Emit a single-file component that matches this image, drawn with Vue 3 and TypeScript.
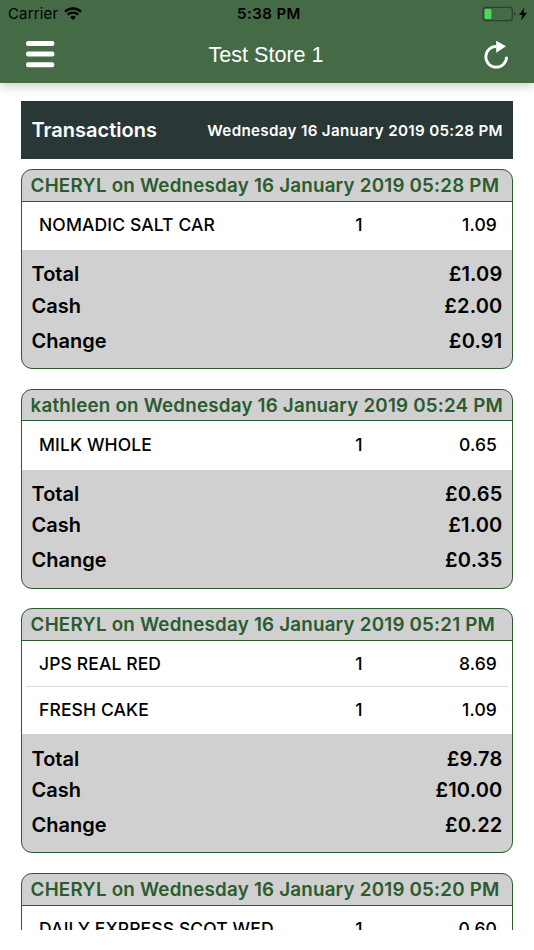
<script setup lang="ts">
interface Item {
  name: string
  qty: number
  price: string
}

interface Transaction {
  user: string
  time: string
  items: Item[]
  total: string
  cash: string
  change: string
}

const day = 'Wednesday 16 January 2019'

const transactions: Transaction[] = [
  {
    user: 'CHERYL', time: '05:28 PM',
    items: [{ name: 'NOMADIC SALT CAR', qty: 1, price: '1.09' }],
    total: '£1.09', cash: '£2.00', change: '£0.91',
  },
  {
    user: 'kathleen', time: '05:24 PM',
    items: [{ name: 'MILK WHOLE', qty: 1, price: '0.65' }],
    total: '£0.65', cash: '£1.00', change: '£0.35',
  },
  {
    user: 'CHERYL', time: '05:21 PM',
    items: [
      { name: 'JPS REAL RED', qty: 1, price: '8.69' },
      { name: 'FRESH CAKE', qty: 1, price: '1.09' },
    ],
    total: '£9.78', cash: '£10.00', change: '£0.22',
  },
  {
    user: 'CHERYL', time: '05:20 PM',
    items: [{ name: 'DAILY EXPRESS SCOT WED', qty: 1, price: '0.60' }],
    total: '', cash: '', change: '',
  },
]
</script>

<template>
  <div class="screen">
    <header class="top">
      <div class="status">
        <div class="carrier">
          <span>Carrier</span>
          <svg class="wifi" viewBox="0 0 18 13" width="18" height="13">
            <path d="M1 4.6 A11.6 11.6 0 0 1 17 4.6" fill="none" stroke="#000" stroke-width="2.5" />
            <path d="M3.7 7.7 A7.7 7.7 0 0 1 14.3 7.7" fill="none" stroke="#000" stroke-width="2.4" />
            <path d="M9 13 L6.1 10.3 A4.1 4.1 0 0 1 11.9 10.3 Z" fill="#000" />
          </svg>
        </div>
        <div class="clock">5:38 PM</div>
        <svg class="battery" viewBox="0 0 46 16" width="46" height="16">
          <rect x="0.9" y="1.3" width="29.4" height="13.4" rx="3" fill="none" stroke="#2b432d" stroke-width="1.3" />
          <rect x="2.6" y="3" width="6.8" height="10" rx="1" fill="#4cd953" />
          <path d="M32.2 5.8 Q33.6 6.5 33.6 8 Q33.6 9.5 32.2 10.2 Z" fill="#2b432d" />
          <path d="M42.4 1.4 L37 9 H40.3 L39 14.6 L45.2 6.7 H41.5 Z" fill="#000" />
        </svg>
      </div>
      <nav class="bar">
        <svg class="menu" viewBox="0 0 30 28" width="30" height="28">
          <rect x="1" y="1" width="28.4" height="5" rx="2.2" fill="#fff" />
          <rect x="1" y="11.5" width="28.4" height="5" rx="2.2" fill="#fff" />
          <rect x="1" y="22.2" width="28.4" height="5" rx="2.2" fill="#fff" />
        </svg>
        <h1 class="title">Test Store 1</h1>
        <svg class="reload" viewBox="0 0 26 30" width="26" height="30">
          <path d="M13.2 7.4 A10.4 10.4 0 1 0 23.6 17.8" fill="none" stroke="#fff" stroke-width="2.8" />
          <path d="M13.2 1.8 L23 7.2 L13.2 13.8 Z" fill="#fff" />
        </svg>
      </nav>
    </header>

    <main class="content">
      <div class="heading">
        <h2 class="heading-title">Transactions</h2>
        <span class="heading-date">{{ day }} 05:28 PM</span>
      </div>

      <section v-for="t in transactions" :key="t.time" class="card">
        <h3 class="card-head">{{ t.user }} on {{ day }} {{ t.time }}</h3>
        <ul class="items">
          <li v-for="item in t.items" :key="item.name" class="item">
            <span>{{ item.name }}</span>
            <span class="qty">{{ item.qty }}</span>
            <span class="price">{{ item.price }}</span>
          </li>
        </ul>
        <div v-if="t.total" class="summary">
          <div class="line"><span>Total</span><span class="amount">{{ t.total }}</span></div>
          <div class="line"><span>Cash</span><span class="amount">{{ t.cash }}</span></div>
          <div class="line change"><span>Change</span><span class="amount">{{ t.change }}</span></div>
        </div>
      </section>
    </main>
  </div>
</template>

<style>
body {
  margin: 0;
  background: #fff;
}
</style>

<style scoped>
.screen {
  display: flex;
  flex-direction: column;
  box-sizing: border-box;
  width: 534px;
  height: 950px;
  padding-bottom: 20px;
  overflow: hidden;
  background: #fff;
  color: #000;
  font-family: Inter, "Liberation Sans", sans-serif;
}

h1,
h2,
h3,
ul {
  margin: 0;
  padding: 0;
}

.top {
  flex: none;
  height: 83px;
  background: #446a46;
  box-shadow: 0 3px 10px rgba(0, 0, 0, 0.2);
}

.status {
  display: grid;
  grid-template-columns: 1fr auto 1fr;
  align-items: center;
  height: 27px;
  padding: 0 6px 0 8px;
  font-size: 15px;
}

.carrier {
  display: flex;
  align-items: center;
  gap: 6px;
  letter-spacing: 0.15px;
}

.clock {
  padding-left: 2px;
  font-weight: 600;
  letter-spacing: 0.45px;
}

.battery {
  justify-self: end;
}

.bar {
  display: grid;
  grid-template-columns: 1fr auto 1fr;
  align-items: center;
  height: 54px;
  padding: 0 25px 0 25px;
}

.title {
  padding: 2px 2px 0 0;
  color: #fff;
  font-family: "Liberation Sans", Arial, sans-serif;
  font-size: 21.6px;
  font-weight: 400;
}

.reload {
  justify-self: end;
}

.content {
  flex: 1;
  min-height: 0;
  padding: 18px 21px 0;
  overflow: hidden;
}

.heading {
  display: flex;
  align-items: center;
  justify-content: space-between;
  height: 58px;
  margin-bottom: 10.4px;
  padding: 0 10.5px;
  background: #2a3737;
  color: #fff;
}

.heading-title {
  font-size: 20px;
  font-weight: 600;
}

.heading-date {
  margin-right: -0.4px;
  font-size: 15.2px;
  font-weight: 600;
  letter-spacing: 0.31px;
}

.card {
  box-sizing: border-box;
  margin-bottom: 19.7px;
  overflow: hidden;
  border: 1.4px solid #2b5b2f;
  border-radius: 11px;
  background: #d0d0d0;
}

.card-head {
  height: 30.5px;
  padding-left: 8.6px;
  border-bottom: 1px solid #2b5b2f;
  color: #2b5b2f;
  font-size: 18.8px;
  font-weight: 600;
  letter-spacing: 0.2px;
  line-height: 31.6px;
  white-space: nowrap;
}

.items {
  padding: 0.2px 4px 2.8px;
  background: #fff;
  list-style: none;
}

.item {
  display: grid;
  grid-template-columns: 1fr 20px 128px;
  align-items: center;
  height: 45.3px;
  padding: 0 11px 0 13px;
  font-size: 17.5px;
  font-weight: 500;
  letter-spacing: 0.12px;
}

.item + .item {
  height: 44.3px;
  border-top: 1px solid #dcdcdc;
}

.qty {
  text-align: center;
}

.price {
  text-align: right;
}

.summary {
  height: 118px;
  box-sizing: border-box;
  padding: 9.2px 9.5px 0;
  font-size: 20px;
  font-weight: 600;
}

.line {
  display: flex;
  justify-content: space-between;
  height: 31.5px;
  line-height: 31.5px;
}

.amount {
  letter-spacing: 0.2px;
}

.change {
  margin-top: 3.3px;
}
</style>
